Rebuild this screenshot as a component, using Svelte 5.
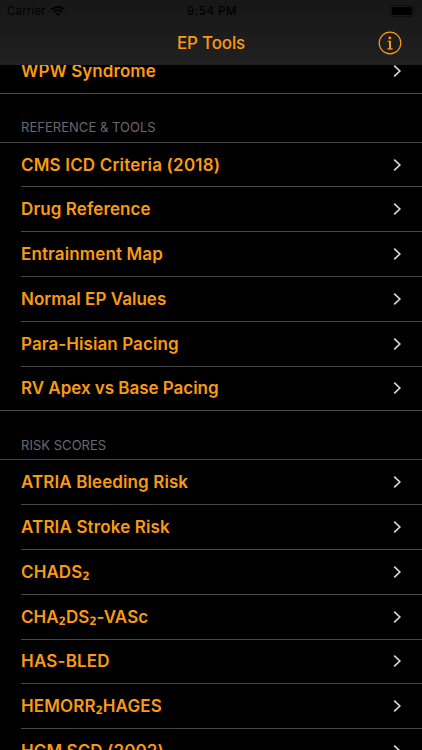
<script>
  // tracking is the letter spacing of the label, in px
  const sections = [
    {
      title: '',
      items: [{ name: 'WPW Syndrome', tracking: 0.06 }]
    },
    {
      title: 'Reference & Tools',
      items: [
        { name: 'CMS ICD Criteria (2018)', tracking: 0.18 },
        { name: 'Drug Reference', tracking: 0.1 },
        { name: 'Entrainment Map', tracking: 0.13 },
        { name: 'Normal EP Values', tracking: 0.02 },
        { name: 'Para-Hisian Pacing', tracking: 0.08 },
        { name: 'RV Apex vs Base Pacing', tracking: -0.03 }
      ]
    },
    {
      title: 'Risk Scores',
      items: [
        { name: 'ATRIA Bleeding Risk', tracking: 0.1 },
        { name: 'ATRIA Stroke Risk', tracking: 0.14 },
        { name: 'CHADS₂', tracking: 0.1 },
        { name: 'CHA₂DS₂-VASc', tracking: 0.08 },
        { name: 'HAS-BLED', tracking: 0.2 },
        { name: 'HEMORR₂HAGES', tracking: 0.12 },
        { name: 'HCM SCD (2002)', tracking: 0.1 }
      ]
    }
  ];
</script>

<div class="screen">
  <header>
    <div class="status">
      <div class="carrier">
        <span>Carrier</span>
        <svg width="14" height="10" viewBox="0 0 14 10" fill="none" stroke="#000" stroke-width="1.9">
          <path d="M0.8 3.5Q7 -1.6 13.2 3.5" />
          <path d="M3 6Q7 2.6 11 6" />
          <path d="M4.9 7.6Q7 6 9.1 7.6L7 9.9Z" fill="#000" stroke="none" />
        </svg>
      </div>
      <div class="time">9:54 PM</div>
      <div class="battery">
        <svg width="27" height="12" viewBox="0 0 27 12">
          <rect x="0.5" y="0.5" width="23" height="11" rx="2.5" fill="none" stroke="#0d0d0d" />
          <rect x="2" y="2" width="20" height="8" rx="1" fill="#000" />
          <path d="M25 4Q26.6 6 25 8Z" fill="#0d0d0d" />
        </svg>
      </div>
    </div>
    <div class="navbar">
      <h1>EP Tools</h1>
      <button aria-label="Info">
        <svg width="24" height="24" viewBox="0 0 24 24">
          <circle cx="12" cy="12" r="10.8" fill="none" stroke="#f99a14" stroke-width="1.2" />
          <circle cx="11.8" cy="6.9" r="1.4" fill="#f99a14" />
          <path d="M9.5 9.7H13V17.3H14.6V18.4H9.4V17.3H11V10.8H9.5Z" fill="#f99a14" />
        </svg>
      </button>
    </div>
  </header>

  <main>
    {#each sections as section}
      <section>
        {#if section.title}
          <h2>{section.title}</h2>
        {/if}
        <ul>
          {#each section.items as item}
            <li>
              <div class="row">
                <span style="letter-spacing: {item.tracking}px">
                  {#each item.name.split(/(₂)/) as part}{#if part === '₂'}<span class="low">₂</span>{:else}{part}{/if}{/each}
                </span>
                <svg width="10" height="14" viewBox="0 0 10 14">
                  <path d="M1.2 1.6L6.8 7L1.2 12.4" fill="none" stroke="#d6d6d8" stroke-width="1.7" />
                </svg>
              </div>
            </li>
          {/each}
        </ul>
      </section>
    {/each}
  </main>
</div>

<style>
  :global(body) {
    background: #000;
    overflow: hidden;
  }

  .screen {
    display: flex;
    flex-direction: column;
    height: 750px;
    overflow: hidden;
    background: #000;
    font-family: Inter, 'Liberation Sans', sans-serif;
  }

  header {
    flex: none;
    height: 65px;
    background: linear-gradient(#171717, #202020);
    z-index: 1;
  }

  .status {
    display: grid;
    grid-template-columns: 1fr auto 1fr;
    align-items: center;
    height: 22px;
    padding: 0 5px 0 7px;
    font-size: 11.5px;
    color: #000;
  }

  .carrier {
    display: flex;
    align-items: center;
    gap: 5px;
    letter-spacing: 0.15px;
  }

  .time {
    font-weight: 500;
    letter-spacing: 0.5px;
  }

  .battery {
    display: flex;
    justify-content: flex-end;
  }

  .navbar {
    display: grid;
    grid-template-columns: 1fr auto 1fr;
    align-items: center;
    height: 42px;
    padding: 0 20px;
  }

  h1 {
    grid-column: 2;
    margin: 0;
    font-size: 17px;
    font-weight: 500;
    letter-spacing: -0.15px;
    color: #f99a14;
  }

  button {
    display: flex;
    justify-self: end;
    padding: 0;
    border: 0;
    background: none;
  }

  main {
    flex: 1;
    min-height: 0;
    overflow: hidden;
  }

  /* the list is scrolled part of the way through the first row */
  section:first-child {
    margin-top: -17.2px;
  }

  h2 {
    box-sizing: border-box;
    height: 48px;
    margin: 0;
    padding: 25.6px 21px 0;
    font-size: 13px;
    line-height: 16px;
    font-weight: 400;
    letter-spacing: 0.03px;
    text-transform: uppercase;
    color: #69696d;
  }

  ul {
    margin: 0;
    padding: 0;
    list-style: none;
    border-top: 1px solid #464648;
  }

  li {
    padding-left: 21px;
  }

  li:last-child {
    padding-left: 0;
    border-bottom: 1px solid #464648;
  }

  .row {
    display: flex;
    align-items: center;
    justify-content: space-between;
    box-sizing: border-box;
    height: 44.8px;
    padding-right: 19px;
    border-bottom: 1px solid #464648;
    font-size: 17px;
    line-height: 20px;
    font-weight: 600;
    color: #f99a14;
  }

  .low {
    font-family: 'Noto Sans', sans-serif;
    font-size: 19px;
    font-weight: 600;
    line-height: 1;
  }

  li:last-child .row {
    height: 43.8px;
    padding-left: 21px;
    border-bottom: 0;
  }
</style>
